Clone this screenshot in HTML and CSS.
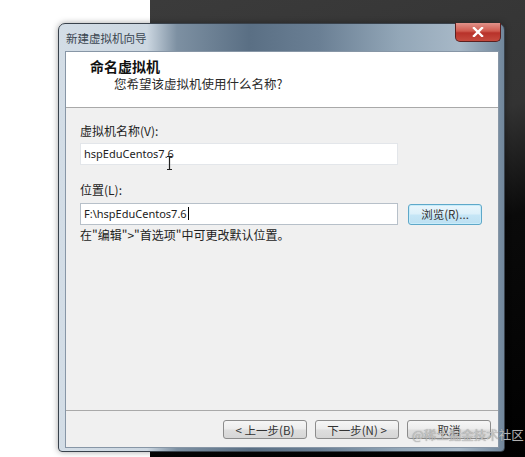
FILE: index.html
```html
<!DOCTYPE html>
<html lang="zh-CN">
<head>
    <meta charset="UTF-8">
    <meta name="viewport" content="width=device-width, initial-scale=1.0">
    <title>新建虚拟机向导</title>
    <link rel="stylesheet" href="styles.css">
</head>
<body>
    <div class="stage">
        <div class="window">
            <div class="titlebar">
                <span class="title">新建虚拟机向导</span>
                <button class="close" type="button">
                    <svg width="12" height="10" viewBox="0 0 12 10">
                        <path d="M2 1 L10 9 M10 1 L2 9" stroke="#fff" stroke-width="2.4" stroke-linecap="square"/>
                    </svg>
                </button>
            </div>
            <div class="client">
                <div class="header">
                    <h1>命名虚拟机</h1>
                    <p>您希望该虚拟机使用什么名称?</p>
                </div>
                <div class="content">
                    <label class="field-label" for="vmname">虚拟机名称(V):</label>
                    <div class="input-wrap">
                        <div class="input" id="vmname">hspEduCentos7.6</div>
                        <svg class="ibeam" width="7" height="14" viewBox="0 0 7 14">
                            <path d="M1 0.5 H6 M3.5 0.5 V13.5 M1 13.5 H6" stroke="#222" stroke-width="1.2" fill="none"/>
                        </svg>
                    </div>

                    <label class="field-label second" for="vmpath">位置(L):</label>
                    <div class="path-row">
                        <div class="input focused" id="vmpath">F:\hspEduCentos7.6<span class="caret"></span></div>
                        <button class="btn browse" type="button">浏览(R)...</button>
                    </div>
                    <p class="hint">在"编辑"&gt;"首选项"中可更改默认位置。</p>
                </div>
                <div class="footer">
                    <button class="btn" type="button">&lt; 上一步(B)</button>
                    <button class="btn" type="button">下一步(N) &gt;</button>
                    <button class="btn" type="button">取消</button>
                </div>
            </div>
        </div>
        <div class="watermark">@稀土掘金技术社区</div>
    </div>
</body>
</html>
```

FILE: styles.css
```css
* {
    box-sizing: border-box;
}
body {
    margin: 0;
    font-family: "Noto Sans CJK SC", "Noto Sans", sans-serif;
    color: #1e1e1e;
}
.stage {
    position: relative;
    width: 525px;
    height: 457px;
    padding: 23px 0 0 58px;
    overflow: hidden;
    background:
        linear-gradient(to right, #fff 150px, transparent 150px),
        linear-gradient(160deg, #3d3d3d 0%, #333 45%, #0a0a0a 62%, #000 100%);
}
.window {
    display: flex;
    flex-direction: column;
    width: 447px;
    height: 429px;
    border: 1px solid #39424c;
    border-radius: 7px 7px 4px 4px;
    background: linear-gradient(to right, #d3dde6 0, #ccd7e1 88px, #7d90a2 118px, #5a6f84 190px, #6a7f94 260px, #93a7b8 340px, #a7b8c7 400px, #6f859a 447px);
    box-shadow: 0 0 6px rgba(0, 0, 0, 0.35);
}
.titlebar {
    display: flex;
    justify-content: space-between;
    align-items: flex-start;
    height: 27px;
    padding: 0 3px 0 7px;
}
.title {
    margin-top: 7px;
    font-size: 11.5px;
    line-height: 14px;
    color: #3a4550;
}
.close {
    display: flex;
    align-items: center;
    justify-content: center;
    width: 46px;
    height: 19px;
    margin-top: -1px;
    padding: 0;
    border: 1px solid #5a2020;
    border-top: none;
    border-radius: 0 0 5px 5px;
    background: linear-gradient(#e2928a 0%, #cf5a4e 45%, #b8322a 55%, #c54a3e 100%);
}
.client {
    display: flex;
    flex-direction: column;
    flex: 1;
    margin: 0 5px 3px 6px;
    border: 1px solid #8796a6;
    background: #f0f0f0;
}
.header {
    height: 56px;
    padding: 5px 0 0 24px;
    background: #fff;
    border-bottom: 1px solid #a9a9a9;
}
.header h1 {
    margin: 0;
    font-size: 14px;
    line-height: 18px;
    font-weight: bold;
    color: #111;
}
.header p {
    margin: 0;
    padding-left: 24px;
    font-size: 12.5px;
    line-height: 17px;
    color: #2a2a2a;
}
.content {
    flex: 1;
    padding: 15px 0 0 14px;
}
.field-label {
    display: block;
    font-size: 12px;
    line-height: 16px;
    color: #222;
}
.field-label.second {
    margin-top: 17px;
}
.input-wrap {
    position: relative;
    margin-top: 4px;
}
.input {
    width: 318px;
    height: 22px;
    padding: 0 3px;
    border: 1px solid #e3e6ea;
    background: #fff;
    font-family: "Noto Sans", sans-serif;
    font-size: 11px;
    line-height: 20px;
    color: #222;
}
.input.focused {
    border-color: #b7c0c9;
}
.caret {
    display: inline-block;
    width: 1px;
    height: 13px;
    margin-left: 1px;
    vertical-align: -2px;
    background: #000;
}
.ibeam {
    position: absolute;
    left: 86px;
    top: 13px;
}
.path-row {
    display: flex;
    align-items: center;
    gap: 10px;
    margin-top: 5px;
}
.btn {
    width: 84px;
    height: 19px;
    padding: 0;
    border: 1px solid #8c8c8c;
    border-radius: 3px;
    background: linear-gradient(#f6f6f6 0%, #ececec 48%, #dedede 52%, #d6d6d6 100%);
    font-family: "Noto Sans CJK SC", sans-serif;
    font-size: 11.5px;
    line-height: 16px;
    color: #333;
}
.browse {
    width: 74px;
    height: 21px;
    border-color: #5ea8c9;
    background: linear-gradient(#eaf6fc 0%, #dcf0fa 48%, #c6e6f6 52%, #bde0f2 100%);
    box-shadow: inset 0 0 0 1px #c8ecfa;
}
.hint {
    margin: 2px 0 0;
    font-size: 12px;
    line-height: 16px;
    color: #222;
}
.footer {
    display: flex;
    justify-content: flex-end;
    gap: 8px;
    height: 37px;
    padding: 9px 7px 0 0;
    border-top: 1px solid #a9a9a9;
}
.watermark {
    position: absolute;
    left: 412px;
    top: 427px;
    font-size: 12.5px;
    line-height: 16px;
    color: rgba(205, 205, 205, 0.85);
    text-shadow: 0 0 1px rgba(60, 60, 60, 0.6);
}
```
